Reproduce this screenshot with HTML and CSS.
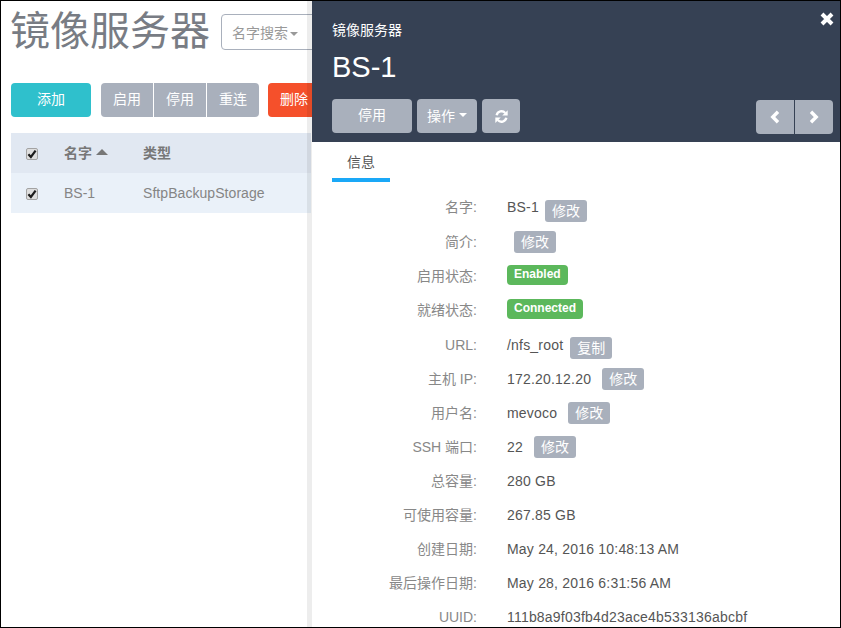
FILE: index.html
```html
<!DOCTYPE html>
<html lang="zh">
<head>
<meta charset="utf-8">
<title>镜像服务器</title>
<link rel="stylesheet" href="styles.css">
</head>
<body>
<div class="frame">
  <main class="page">
    <div class="title-row">
      <h1 class="title">镜像服务器</h1>
      <div class="search"><span class="search-drop">名字搜索<i class="caret"></i></span></div>
    </div>
    <div class="toolbar">
      <button class="btn btn-add">添加</button>
      <div class="group">
        <button class="btn btn-grey">启用</button>
        <button class="btn btn-grey">停用</button>
        <button class="btn btn-grey">重连</button>
      </div>
      <button class="btn btn-del">删除</button>
    </div>
    <div class="table">
      <div class="tr th">
        <span class="c-check"><span class="check"><svg viewBox="0 0 10 10" width="10" height="10"><path d="M1.4 5.2 3.9 8 8.6 1.6" fill="none" stroke="#1c1c1c" stroke-width="2.2"/></svg></span></span>
        <span class="c-name">名字<i class="caret-up"></i></span>
        <span class="c-type">类型</span>
      </div>
      <div class="tr td">
        <span class="c-check"><span class="check"><svg viewBox="0 0 10 10" width="10" height="10"><path d="M1.4 5.2 3.9 8 8.6 1.6" fill="none" stroke="#1c1c1c" stroke-width="2.2"/></svg></span></span>
        <span class="c-name">BS-1</span>
        <span class="c-type">SftpBackupStorage</span>
      </div>
    </div>
  </main>

  <aside class="panel">
    <header class="panel-head">
      <button class="close" aria-label="关闭"><svg viewBox="0 0 14 14" width="14" height="14"><path d="M2 2 12 12M12 2 2 12" fill="none" stroke="#fff" stroke-width="4"/></svg></button>
      <div class="crumb">镜像服务器</div>
      <div class="name">BS-1</div>
      <div class="actions">
        <button class="btn btn-p btn-stop">停用</button>
        <button class="btn btn-p btn-op">操作<i class="caret caret-w"></i></button>
        <button class="btn btn-p btn-ref" aria-label="刷新"><svg viewBox="0 0 16 16" width="15" height="15"><path d="M2.8 6.6A5.4 5.4 0 0 1 12 4.2" fill="none" stroke="#fff" stroke-width="2.5"/><path d="M14.6 1.2V7H8.8Z" fill="#fff"/><path d="M13.2 9.4A5.4 5.4 0 0 1 4 11.8" fill="none" stroke="#fff" stroke-width="2.5"/><path d="M1.4 14.8V9H7.2Z" fill="#fff"/></svg></button>
        <div class="pager">
          <button class="btn btn-p btn-nav" aria-label="上一个"><svg viewBox="0 0 12 14" width="12" height="14"><path d="M9 1.8 3.8 7 9 12.2" fill="none" stroke="#fff" stroke-width="3.4"/></svg></button>
          <button class="btn btn-p btn-nav" aria-label="下一个"><svg viewBox="0 0 12 14" width="12" height="14"><path d="M3 1.8 8.2 7 3 12.2" fill="none" stroke="#fff" stroke-width="3.4"/></svg></button>
        </div>
      </div>
    </header>
    <nav class="tabs"><span class="tab">信息</span></nav>
    <dl class="info">
      <div class="row row-tall"><dt>名字:</dt><dd>BS-1<button class="mini mini-name">修改</button></dd></div>
      <div class="row"><dt>简介:</dt><dd class="dd-gap"><button class="mini">修改</button></dd></div>
      <div class="row"><dt>启用状态:</dt><dd><span class="badge">Enabled</span></dd></div>
      <div class="row row-tall"><dt>就绪状态:</dt><dd><span class="badge">Connected</span></dd></div>
      <div class="row"><dt>URL:</dt><dd>/nfs_root<button class="mini mini-url">复制</button></dd></div>
      <div class="row"><dt>主机 IP:</dt><dd>172.20.12.20<button class="mini mini-wide">修改</button></dd></div>
      <div class="row"><dt>用户名:</dt><dd>mevoco<button class="mini mini-wide">修改</button></dd></div>
      <div class="row"><dt>SSH 端口:</dt><dd>22<button class="mini mini-wide">修改</button></dd></div>
      <div class="row"><dt>总容量:</dt><dd>280 GB</dd></div>
      <div class="row"><dt>可使用容量:</dt><dd>267.85 GB</dd></div>
      <div class="row"><dt>创建日期:</dt><dd>May 24, 2016 10:48:13 AM</dd></div>
      <div class="row"><dt>最后操作日期:</dt><dd>May 28, 2016 6:31:56 AM</dd></div>
      <div class="row"><dt>UUID:</dt><dd>111b8a9f03fb4d23ace4b533136abcbf</dd></div>
    </dl>
  </aside>
</div>
</body>
</html>
```
FILE: styles.css
```css
* { box-sizing: border-box; }
html, body { margin: 0; padding: 0; background: #fff; }
body {
  font-family: "Liberation Sans", "Noto Sans CJK SC", sans-serif;
  font-size: 14px;
  color: #777;
}
.frame {
  position: relative;
  width: 841px;
  height: 628px;
  border: 1px solid #000;
  overflow: hidden;
  background: #fff;
}
.page { padding: 13px 0 0 10px; }
.title-row { display: flex; align-items: flex-start; height: 69px; }
.title {
  margin: -1px 0 0 -1px;
  font-size: 40px;
  line-height: 36px;
  font-weight: 400;
  color: #787c84;
  width: 211px;
}
.search {
  width: 200px;
  height: 36px;
  border: 1px solid #a9b0bc;
  border-radius: 4px;
  display: flex;
  align-items: center;
  padding-left: 10px;
}
.search-drop { font-size: 14px; color: #999; }
.caret {
  display: inline-block;
  margin-left: 2px;
  vertical-align: middle;
  border-top: 4px solid #999;
  border-left: 4px solid transparent;
  border-right: 4px solid transparent;
}
.caret-w { border-top-color: #fff; margin-left: 4px; }
.toolbar { display: flex; height: 34px; }
.btn {
  border: 0;
  margin: 0;
  padding: 0 0 3px;
  font: inherit;
  color: #fff;
  border-radius: 4px;
  height: 34px;
  display: flex;
  align-items: center;
  justify-content: center;
}
.btn-add { width: 80px; padding-bottom: 5px; background: #2fc0cc; }
.group { display: flex; gap: 1px; margin-left: 10px; width: 158px; }
.btn-grey { width: 52px; padding-bottom: 5px; background: #a9b0bc; border-radius: 0; }
.btn-grey:first-child { border-radius: 4px 0 0 4px; }
.btn-grey:last-child { border-radius: 0 4px 4px 0; }
.btn-del { width: 60px; margin-left: 9px; background: #f5502b; justify-content: flex-start; padding-left: 12px; padding-bottom: 5px; }
.table { margin-top: 16px; width: 300px; }
.tr { display: flex; align-items: center; height: 40px; color: #777; }
.th { background: #e1e8f2; font-weight: 700; }
.td { background: #eaf1f9; color: #858585; }
.th .c-name, .th .c-type { padding-bottom: 2px; }
.c-check { width: 53px; padding-left: 15px; display: flex; }
.c-name { width: 79px; display: flex; align-items: center; }
.c-type { flex: 1; white-space: nowrap; letter-spacing: 0.06px; }
.check {
  width: 12px;
  height: 12px;
  margin-top: 2px;
  border: 1px solid #a3a3a3;
  border-radius: 2px;
  background: #dedede;
  display: flex;
}
.caret-up {
  margin-left: 4px;
  border-bottom: 6px solid #777;
  border-left: 6px solid transparent;
  border-right: 6px solid transparent;
}
.panel {
  position: absolute;
  left: 311px;
  top: 0;
  bottom: 0;
  right: 0;
  background: #fff;
  box-shadow: -5px 0 0 rgba(0, 0, 0, 0.07);
}
.panel-head {
  position: relative;
  height: 141px;
  padding: 21px 7px 0 20px;
  background: #364154;
  color: #fff;
}
.close {
  position: absolute;
  top: 11px;
  right: 6px;
  width: 14px;
  height: 14px;
  padding: 0;
  border: 0;
  background: none;
  display: flex;
}
.crumb { font-size: 14px; line-height: 16px; }
.name { font-size: 29px; line-height: 34px; margin-top: 12px; }
.actions { display: flex; margin-top: 15px; gap: 5px; }
.btn-p { background: #a9b0bc; }
.btn-stop { width: 80px; padding-bottom: 4px; }
.btn-op { width: 60px; }
.btn-ref { width: 38px; padding-bottom: 0; }
.pager { margin-left: auto; margin-top: 1px; display: flex; gap: 1px; }
.btn-nav { width: 38px; padding-bottom: 0; border-radius: 0 4px 4px 0; }
.btn-nav:first-child { border-radius: 4px 0 0 4px; }
.tabs { padding-left: 20px; height: 40px; }
.tab {
  display: block;
  width: 58px;
  height: 40px;
  text-align: center;
  line-height: 40px;
  color: #555;
  border-bottom: 4px solid #1aa8f7;
}
.info { margin: 8px 0 0; }
.row { display: flex; height: 34px; align-items: flex-start; }
.row-tall { height: 35px; }
.row dt { width: 165px; text-align: right; color: #888; line-height: 34px; white-space: nowrap; }
.row dd { margin: 0 0 0 30px; color: #555; line-height: 34px; display: flex; white-space: nowrap; letter-spacing: 0.2px; }
.dd-gap { padding-left: 7px; }
.mini {
  margin: 6px 0 0;
  width: 42px;
  height: 22px;
  padding: 0;
  border: 0;
  border-radius: 3px;
  background: #a9b0bc;
  color: #fff;
  font: inherit;
  font-size: 14px;
  line-height: 22px;
  letter-spacing: 0;
}
.mini-name { margin: 10px 0 0 6px; }
.mini-url { margin: 9px 0 0 7px; }
.mini-wide { margin-left: 11px; }
.badge {
  margin-top: 6px;
  height: 20px;
  padding: 0 7px;
  border-radius: 4px;
  background: #5cb85c;
  color: #fff;
  font-size: 12px;
  font-weight: 700;
  line-height: 18px;
  letter-spacing: 0;
}
```
